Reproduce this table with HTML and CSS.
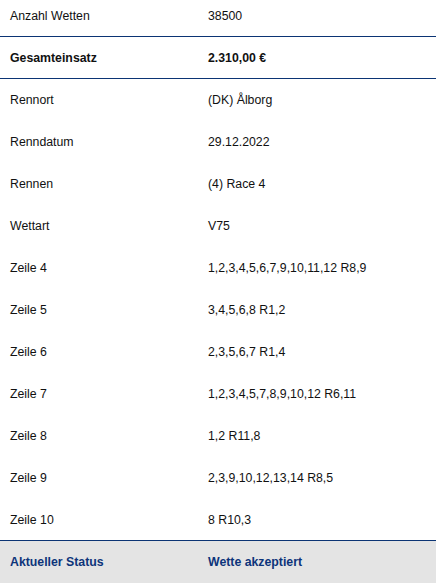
FILE: index.html
```html
<!DOCTYPE html>
<html lang="de">
<head>
<meta charset="utf-8">
<link rel="stylesheet" href="styles.css">
</head>
<body>
<div class="table">
  <div class="row first border"><span class="label">Anzahl Wetten</span><span class="value">38500</span></div>
  <div class="row bold border"><span class="label">Gesamteinsatz</span><span class="value">2.310,00 €</span></div>
  <div class="row"><span class="label">Rennort</span><span class="value">(DK) Ålborg</span></div>
  <div class="row"><span class="label">Renndatum</span><span class="value">29.12.2022</span></div>
  <div class="row"><span class="label">Rennen</span><span class="value">(4) Race 4</span></div>
  <div class="row"><span class="label">Wettart</span><span class="value">V75</span></div>
  <div class="row"><span class="label">Zeile 4</span><span class="value">1,2,3,4,5,6,7,9,10,11,12 R8,9</span></div>
  <div class="row"><span class="label">Zeile 5</span><span class="value">3,4,5,6,8 R1,2</span></div>
  <div class="row"><span class="label">Zeile 6</span><span class="value">2,3,5,6,7 R1,4</span></div>
  <div class="row"><span class="label">Zeile 7</span><span class="value">1,2,3,4,5,7,8,9,10,12 R6,11</span></div>
  <div class="row"><span class="label">Zeile 8</span><span class="value">1,2 R11,8</span></div>
  <div class="row"><span class="label">Zeile 9</span><span class="value">2,3,9,10,12,13,14 R8,5</span></div>
  <div class="row border"><span class="label">Zeile 10</span><span class="value">8 R10,3</span></div>
  <div class="row status"><span class="label">Aktueller Status</span><span class="value">Wette akzeptiert</span></div>
</div>
</body>
</html>
```
FILE: styles.css
```css
html, body {
  margin: 0;
  padding: 0;
  background: #ffffff;
}
body {
  font-family: "Liberation Sans", Arial, sans-serif;
  font-size: 12.3px;
  color: #111111;
  overflow: hidden;
}
.table {
  display: flex;
  flex-direction: column;
}
.row {
  box-sizing: border-box;
  height: 42px;
  flex-shrink: 0;
  display: flex;
  align-items: center;
  padding-left: 10px;
}
.label {
  width: 198px;
  flex-shrink: 0;
}
.value {
  flex: 1;
}
.row.first {
  margin-top: -5px;
}
.row.border {
  border-bottom: 1px solid #0b3474;
}
.row.bold {
  font-weight: bold;
}
.row.status {
  background: #e4e4e4;
  color: #0d347a;
  font-weight: bold;
}
```
